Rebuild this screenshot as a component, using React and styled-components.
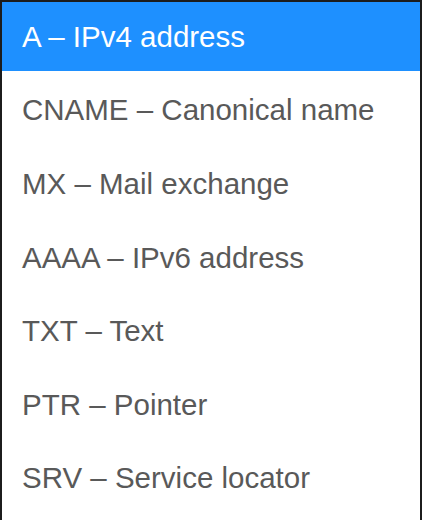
import React from 'react';
import styled, { createGlobalStyle } from 'styled-components';

const GlobalStyle = createGlobalStyle`
  html, body {
    margin: 0;
    padding: 0;
    background: #fff;
  }
`;

const ListBox = styled.ul`
  list-style: none;
  margin: 0;
  padding: 0;
  width: 422px;
  height: 560px;
  box-sizing: border-box;
  border: 2px solid #1c1c1c;
  border-bottom: none;
  display: flex;
  flex-direction: column;
  gap: 4.6px;
  background: #fff;
  font-family: "Liberation Sans", Arial, sans-serif;
`;

const Option = styled.li`
  height: 69px;
  flex-shrink: 0;
  display: flex;
  align-items: center;
  padding-left: 20px;
  font-size: 29.5px;
  line-height: 1;
  color: ${({ $selected }) => ($selected ? '#fff' : '#595959')};
  background: ${({ $selected }) => ($selected ? '#1e90ff' : 'transparent')};
  cursor: default;
`;

const records = [
  'A – IPv4 address',
  'CNAME – Canonical name',
  'MX – Mail exchange',
  'AAAA – IPv6 address',
  'TXT – Text',
  'PTR – Pointer',
  'SRV – Service locator',
];

export default function App() {
  return (
    <>
      <GlobalStyle />
      <ListBox>
        {records.map((label, i) => (
          <Option key={label} $selected={i === 0}>
            {label}
          </Option>
        ))}
      </ListBox>
    </>
  );
}
